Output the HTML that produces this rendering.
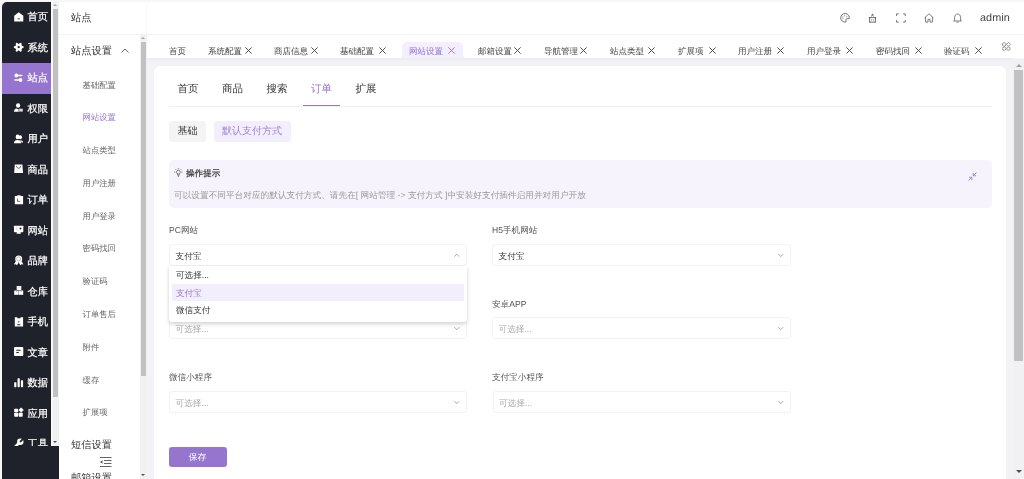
<!DOCTYPE html>
<html><head><meta charset="utf-8">
<style>
*{box-sizing:border-box;margin:0;padding:0}
body{will-change:transform}
html,body{width:1024px;height:479px;overflow:hidden;background:#f6f6f8;font-family:"Liberation Sans",sans-serif;color:#333;text-rendering:geometricPrecision}
.a{position:absolute}
.t{position:absolute;white-space:nowrap;line-height:1}
#side1{left:2px;top:2px;width:56.6px;height:477px;background:#1f222a;border-top-left-radius:5px;overflow:hidden}
#clip1{position:absolute;left:0;top:0;width:49.4px;height:444px;overflow:hidden}
.it{position:absolute;left:0;width:49.5px;height:30.5px}
.it.on{background:#9575cd}
.it span{position:absolute;left:25.5px;top:11.1px;color:#fff;font-size:10.25px;line-height:1;-webkit-text-stroke:0.2px #fff}
.it svg{position:absolute;left:12px;top:9.5px;width:10px;height:10px}
.sbar{position:absolute;background:#f1f1f1}
.thumb{position:absolute;background:#c1c1c1}
.arr{position:absolute;width:0;height:0;border-left:2.5px solid transparent;border-right:2.5px solid transparent}
#side2{left:58.6px;top:2px;width:88.4px;height:477px;background:#fff;border-right:1px solid #f8f8fa}
.s2{position:absolute;font-size:8.3px;color:#666;white-space:nowrap;line-height:1}
#hdr{left:147px;top:2px;width:877px;height:32px;background:#fff}
#hline{left:58.6px;top:33.6px;width:965.4px;height:1px;background:#f3f3f5}
#tabs{left:147px;top:34px;width:877px;height:24px;background:#fff}
.tab{position:absolute;top:46.5px;font-size:8.5px;color:#444;white-space:nowrap;line-height:1}
.x{display:inline-block;width:7px;height:7px;margin-left:3.5px;position:relative;top:0.5px}
#content{left:147px;top:58px;width:866px;height:421px;background:linear-gradient(#ebebf1,#f2f2f7 4px)}
#card{left:154.4px;top:66px;width:851.4px;height:420px;background:#fff;border-radius:6px}
.lbl{position:absolute;font-size:8.6px;color:#555;white-space:nowrap;line-height:1}
.sel{position:absolute;height:21.5px;border:1px solid #f2f2f4;border-radius:3px;background:#fff}
.sel span{position:absolute;left:5.6px;top:6.6px;font-size:8.6px;line-height:1;color:#333}
.sel span.ph{color:#aaa}
.sel svg{position:absolute;right:6px;top:8px;width:6px;height:5px}
</style></head><body>
<div id="side1" class="a"><div id="clip1">
  <div class="it" style="top:0.0px"><svg viewBox="0 0 10 10" style="overflow:visible"><path d="M4.7 0.3L0.2 3.8V9.4H9.3V3.8Z" fill="#fff"/><rect x="3.5" y="6.5" width="2.6" height=".75" rx=".35" fill="#1f222a"/></svg><span>首页</span></div>
  <div class="it" style="top:30.5px"><svg viewBox="0 0 10 10" style="overflow:visible"><circle cx="4.7" cy="5.2" r="3.4" fill="#fff"/><g stroke="#fff" stroke-width="2.3" stroke-linecap="round"><path d="M0.9 5.2H8.5M2.8 1.9L6.6 8.5M6.6 1.9L2.8 8.5"/></g><circle cx="4.7" cy="5.1" r="1.15" fill="#1f222a"/></svg><span>系统</span></div>
  <div class="it on" style="top:61.0px"><svg viewBox="0 0 10 10" style="overflow:visible"><g fill="#fff"><rect x="2.4" y="1.85" width="6" height="1.3" rx=".65"/><rect x="0.2" y="6.35" width="6.3" height="1.3" rx=".65"/><circle cx="2.4" cy="2.5" r="1.9"/><circle cx="6.5" cy="7" r="1.9"/></g></svg><span>站点</span></div>
  <div class="it" style="top:91.5px"><svg viewBox="0 0 10 10" style="overflow:visible"><g fill="#fff"><ellipse cx="4.1" cy="2.5" rx="2.1" ry="2.3"/><path d="M0 8.7C0 6.8 1 5.7 2.6 5.5L4.1 6.2L5.6 5.5C7.5 5.7 8.8 6.8 8.8 8.7Z"/></g><rect x="5" y="5.4" width="4" height="3.4" rx=".4" fill="#fff" stroke="#1f222a" stroke-width=".7"/><rect x="6.3" y="6.6" width="1.4" height=".9" fill="#1f222a" opacity=".5"/></svg><span>权限</span></div>
  <div class="it" style="top:122.0px"><svg viewBox="0 0 10 10" style="overflow:visible"><g fill="#fff"><ellipse cx="6.4" cy="3.3" rx="1.6" ry="2"/><ellipse cx="3.6" cy="2.9" rx="2" ry="2.4"/><path d="M0 9.2C0 7.2 1.3 6 3.6 6C5.9 6 7.2 7.2 7.2 9.2Z"/><path d="M5.6 5.9C7.6 5.9 9.1 7 9.1 8.6H7.6C7.4 7.3 6.8 6.5 5.6 6.2Z"/></g></svg><span>用户</span></div>
  <div class="it" style="top:152.5px"><svg viewBox="0 0 10 10" style="overflow:visible"><path d="M0.8 0.5H8.4L9 9H0.2Z" fill="#fff"/><path d="M2.4 1.8Q2.6 4.3 4.6 4.3Q6.6 4.3 6.8 1.8" stroke="#1f222a" stroke-width=".6" fill="none"/></svg><span>商品</span></div>
  <div class="it" style="top:183.0px"><svg viewBox="0 0 10 10" style="overflow:visible"><rect x="0.8" y="1" width="8.3" height="8.2" rx=".5" fill="#fff"/><path d="M3.3 0.3H6.5V1.6H3.3Z" fill="#fff"/><path d="M3.5 3.5V6.3H6.2" stroke="#1f222a" stroke-width=".8" fill="none" opacity=".8"/></svg><span>订单</span></div>
  <div class="it" style="top:213.5px"><svg viewBox="0 0 10 10" style="overflow:visible"><rect x="0" y="0.8" width="9.3" height="6.4" rx=".4" fill="#fff"/><path d="M2.9 7H6.5L6.9 8.7H2.5Z" fill="#fff"/><circle cx="6.5" cy="3.4" r="1" fill="#1f222a"/><g stroke="#1f222a" stroke-width=".4" opacity=".35"><path d="M1.8 2.3H3.6M1.8 3.7H3.6M1.8 5H5"/></g></svg><span>网站</span></div>
  <div class="it" style="top:244.0px"><svg viewBox="0 0 10 10" style="overflow:visible"><g fill="#fff"><path d="M1.8 5.2L-0.1 8.4L1.9 8.2L2.9 9.3L4.7 6.5Z"/><path d="M7.6 5.2L9.4 8.4L7.4 8.2L6.4 9.3L4.7 6.5Z"/><circle cx="4.7" cy="2.9" r="3.5"/></g><circle cx="4.7" cy="2.9" r="2" fill="none" stroke="#1f222a" stroke-width=".5" opacity=".6"/><circle cx="4.7" cy="2.9" r="1.1" fill="#fff"/></svg><span>品牌</span></div>
  <div class="it" style="top:274.5px"><svg viewBox="0 0 10 10" style="overflow:visible"><g fill="#fff"><rect x="2.7" y="0" width="4.6" height="4"/><rect x="0.2" y="4.5" width="4.4" height="4.3"/><rect x="4.8" y="4.5" width="4.4" height="4.3"/></g><g fill="#1f222a" opacity=".7"><rect x="4.4" y="0.9" width="1.2" height=".4"/><rect x="1.9" y="5.6" width="1.1" height=".4"/><rect x="6.5" y="5.6" width="1.1" height=".4"/></g></svg><span>仓库</span></div>
  <div class="it" style="top:305.0px"><svg viewBox="0 0 10 10" style="overflow:visible"><path d="M0.8 0.3H3.3V1.3H6.5V0.3H9.1V9.5H0.8Z" fill="#fff"/><path d="M3.8 3.5L6.3 4.8L3.8 6.2Z" fill="#1f222a" opacity=".45"/><rect x="3.1" y="7.3" width="3.4" height=".9" rx=".4" fill="#1f222a"/></svg><span>手机</span></div>
  <div class="it" style="top:335.5px"><svg viewBox="0 0 10 10" style="overflow:visible"><rect x="0" y="0" width="9.3" height="9" rx="1.1" fill="#fff"/><rect x="2.1" y="2.85" width="4.7" height=".9" rx=".45" fill="#1f222a"/><rect x="2.1" y="5.05" width="2.9" height=".9" rx=".45" fill="#1f222a"/></svg><span>文章</span></div>
  <div class="it" style="top:366.0px"><svg viewBox="0 0 10 10" style="overflow:visible"><g fill="#fff"><rect x="0.2" y="4.2" width="2.2" height="5" rx=".6"/><rect x="3.55" y="0.3" width="2.2" height="8.9" rx=".6"/><rect x="6.9" y="2.3" width="2.2" height="6.9" rx=".6"/></g></svg><span>数据</span></div>
  <div class="it" style="top:396.5px"><svg viewBox="0 0 10 10" style="overflow:visible"><g fill="#fff"><rect x="0.2" y="0.8" width="4" height="3.4" rx=".7"/><rect x="0.2" y="4.75" width="4" height="3.95" rx=".7"/><rect x="4.7" y="4.75" width="4" height="3.95" rx=".7"/><path d="M7.1 -0.2L9.3 2.05L7.1 4.3L4.9 2.05Z" stroke="#fff" stroke-width=".8" stroke-linejoin="round"/></g></svg><span>应用</span></div>
  <div class="it" style="top:427.0px"><svg viewBox="0 0 10 10" style="overflow:visible"><circle cx="6.3" cy="2.7" r="3.2" fill="#fff"/><path d="M6 3L1.3 7.7" stroke="#fff" stroke-width="2.6" stroke-linecap="round"/><path d="M6.6 2.4L9.8 -0.8" stroke="#1f222a" stroke-width="1.9" stroke-linecap="round"/></svg><span>工具</span></div>
</div></div>
<!-- sidebar1 scrollbar -->
<div class="a" style="left:51.4px;top:2px;width:1.2px;height:444px;background:#f8f8f8"></div>
<div class="sbar" style="left:52.5px;top:2px;width:6.1px;height:444px"></div>
<div class="thumb" style="left:52.9px;top:9px;width:5.2px;height:388.3px"></div>
<div class="arr" style="left:53.2px;top:4.3px;border-bottom:2.5px solid #a3a3a3"></div>
<div class="arr" style="left:53.2px;top:441px;border-top:2.5px solid #505050"></div>
<div id="side2" class="a"></div>
<div class="s2" style="left:71px;top:14.1px;font-size:10.25px;color:#333">站点</div>
<div class="s2" style="left:71px;top:46.8px;font-size:10.25px;color:#333">站点设置</div>
<svg class="a" style="left:120.5px;top:47.9px" width="8" height="5" viewBox="0 0 8 5"><path d="M0.5 4.5L4 1L7.5 4.5" stroke="#555" stroke-width=".9" fill="none"/></svg>
<div class="s2" style="left:82.6px;top:80.5px">基础配置</div>
<div class="s2" style="left:82.6px;top:113px;color:#9575cd">网站设置</div>
<div class="s2" style="left:82.6px;top:146px">站点类型</div>
<div class="s2" style="left:82.6px;top:178.5px">用户注册</div>
<div class="s2" style="left:82.6px;top:211.5px">用户登录</div>
<div class="s2" style="left:82.6px;top:244px">密码找回</div>
<div class="s2" style="left:82.6px;top:277px">验证码</div>
<div class="s2" style="left:82.6px;top:309.5px">订单售后</div>
<div class="s2" style="left:82.6px;top:342.5px">附件</div>
<div class="s2" style="left:82.6px;top:375.5px">缓存</div>
<div class="s2" style="left:82.6px;top:408px">扩展项</div>
<div class="s2" style="left:71px;top:440.6px;font-size:10.25px;color:#333">短信设置</div>
<svg class="a" style="left:99.5px;top:457px" width="12" height="10" viewBox="0 0 12 10"><g stroke="#555" stroke-width=".9"><path d="M0 0.5H11.5M4 3.5H11.5M4 6.5H11.5M0 9.5H11.5"/></g><path d="M0 5L2.5 3.3V6.7Z" fill="#555"/></svg>
<div class="s2" style="left:71px;top:474.2px;font-size:10.25px;color:#333">邮箱设置</div>
<!-- sidebar2 scrollbar -->
<div class="sbar" style="left:140px;top:34.6px;width:7px;height:444.4px"></div>
<div class="thumb" style="left:141px;top:42.2px;width:5.2px;height:334.3px"></div>
<div class="arr" style="left:141px;top:37.3px;border-bottom:2.5px solid #a3a3a3"></div>
<div class="arr" style="left:141px;top:473.5px;border-top:2.5px solid #505050"></div>

<div id="hdr" class="a"></div>
<!-- header icons -->
<svg class="a" style="left:839.5px;top:12.5px" width="10" height="10" viewBox="0 0 10 10" fill="none" stroke="#666" stroke-width=".9"><path d="M9.2 5.7A4.3 4.3 0 1 0 5.9 9L6 6.5Q6.1 5.8 6.8 5.7Z" stroke-linejoin="round"/><g fill="#888" stroke="none"><circle cx="2.9" cy="3.9" r=".6"/><circle cx="4.8" cy="2.7" r=".6"/><circle cx="6.8" cy="3.8" r=".6"/><circle cx="2.9" cy="5.8" r=".6"/></g></svg>
<svg class="a" style="left:868px;top:12.5px" width="10" height="10" viewBox="0 0 10 10" fill="none" stroke="#555" stroke-width=".85"><path d="M3.6 3.4L4.5 0.9L5.4 3.4M1.6 4.6H7.4M1.6 4.6V9.2M7.4 4.6V9.2M1 9.2H8M3.6 6.6V7.6M5.4 6.6V7.6"/><circle cx="1.4" cy="4.6" r=".7" fill="#555" stroke="none"/><circle cx="7.6" cy="4.6" r=".7" fill="#555" stroke="none"/></svg>
<svg class="a" style="left:896px;top:12.5px" width="10" height="10" viewBox="0 0 10 10" fill="none" stroke="#555" stroke-width=".8"><path d="M0.4 3V0.9H2.8M7.2 0.9H9.3V3M9.3 7V9.1H7.2M2.8 9.1H0.4V7"/></svg>
<svg class="a" style="left:923.5px;top:12.5px" width="10" height="10" viewBox="0 0 10 10" fill="none" stroke="#555" stroke-width=".75" stroke-linejoin="round"><path d="M0.5 4.9L5 0.8L9.5 4.9M1.6 4V9.1H4V6.3H6V9.1H8.4V4"/></svg>
<svg class="a" style="left:952.5px;top:12.5px" width="10" height="10" viewBox="0 0 10 10" fill="none" stroke="#555" stroke-width=".75"><path d="M1.6 7.8V4.6C1.6 2.3 3 0.9 4.6 0.9S7.6 2.3 7.6 4.6V7.8M0.4 8H8.8M3.6 9.1H5.6"/></svg>
<div class="t" style="left:980px;top:13.3px;font-size:10.8px;letter-spacing:0.1px;color:#444">admin</div>
<div id="tabs" class="a"></div>
<div id="hline" class="a"></div>
<div class="tab" style="left:169px">首页</div>
<div class="tab" style="left:208px">系统配置</div><svg class="a" style="left:245px;top:47.3px" width="7" height="7" viewBox="0 0 7 7"><path d="M0.4 0.4L6.6 6.6M6.6 0.4L0.4 6.6" stroke="#444" stroke-width=".95"/></svg>
<div class="tab" style="left:274px">商店信息</div><svg class="a" style="left:310.9px;top:47.3px" width="7" height="7" viewBox="0 0 7 7"><path d="M0.4 0.4L6.6 6.6M6.6 0.4L0.4 6.6" stroke="#444" stroke-width=".95"/></svg>
<div class="a" style="left:402px;top:41.5px;width:61.2px;height:16.5px;background:#f3effc;border-radius:5px 5px 0 0"></div><div class="a" style="left:398.5px;top:54.5px;width:3.5px;height:3.5px;background:radial-gradient(circle at 0 0,transparent 3.5px,#f3effc 3.6px)"></div><div class="a" style="left:463.2px;top:54.5px;width:3.5px;height:3.5px;background:radial-gradient(circle at 100% 0,transparent 3.5px,#f3effc 3.6px)"></div>
<div class="tab" style="left:340px">基础配置</div><svg class="a" style="left:379.3px;top:47.3px" width="7" height="7" viewBox="0 0 7 7"><path d="M0.4 0.4L6.6 6.6M6.6 0.4L0.4 6.6" stroke="#444" stroke-width=".95"/></svg>
<div class="tab" style="left:409px;color:#9575cd">网站设置</div><svg class="a" style="left:448.1px;top:47.3px" width="7" height="7" viewBox="0 0 7 7"><path d="M0.4 0.4L6.6 6.6M6.6 0.4L0.4 6.6" stroke="#9575cd" stroke-width=".95"/></svg>
<div class="tab" style="left:478px">邮箱设置</div><svg class="a" style="left:514.1px;top:47.3px" width="7" height="7" viewBox="0 0 7 7"><path d="M0.4 0.4L6.6 6.6M6.6 0.4L0.4 6.6" stroke="#444" stroke-width=".95"/></svg>
<div class="tab" style="left:544px">导航管理</div><svg class="a" style="left:580.4px;top:47.3px" width="7" height="7" viewBox="0 0 7 7"><path d="M0.4 0.4L6.6 6.6M6.6 0.4L0.4 6.6" stroke="#444" stroke-width=".95"/></svg>
<div class="tab" style="left:610px">站点类型</div><svg class="a" style="left:647.6px;top:47.3px" width="7" height="7" viewBox="0 0 7 7"><path d="M0.4 0.4L6.6 6.6M6.6 0.4L0.4 6.6" stroke="#444" stroke-width=".95"/></svg>
<div class="tab" style="left:678px">扩展项</div><svg class="a" style="left:708.5px;top:47.3px" width="7" height="7" viewBox="0 0 7 7"><path d="M0.4 0.4L6.6 6.6M6.6 0.4L0.4 6.6" stroke="#444" stroke-width=".95"/></svg>
<div class="tab" style="left:738px">用户注册</div><svg class="a" style="left:777.2px;top:47.3px" width="7" height="7" viewBox="0 0 7 7"><path d="M0.4 0.4L6.6 6.6M6.6 0.4L0.4 6.6" stroke="#444" stroke-width=".95"/></svg>
<div class="tab" style="left:807px">用户登录</div><svg class="a" style="left:846.4px;top:47.3px" width="7" height="7" viewBox="0 0 7 7"><path d="M0.4 0.4L6.6 6.6M6.6 0.4L0.4 6.6" stroke="#444" stroke-width=".95"/></svg>
<div class="tab" style="left:876px">密码找回</div><svg class="a" style="left:914.7px;top:47.3px" width="7" height="7" viewBox="0 0 7 7"><path d="M0.4 0.4L6.6 6.6M6.6 0.4L0.4 6.6" stroke="#444" stroke-width=".95"/></svg>
<div class="tab" style="left:944px">验证码</div><svg class="a" style="left:974.7px;top:47.3px" width="7" height="7" viewBox="0 0 7 7"><path d="M0.4 0.4L6.6 6.6M6.6 0.4L0.4 6.6" stroke="#444" stroke-width=".95"/></svg>
<svg class="a" style="left:1001.6px;top:42.2px" width="9" height="9" viewBox="0 0 9 9" fill="none" stroke="#777" stroke-width=".75"><rect x="0.5" y="0.8" width="3.2" height="3.2" rx="1"/><path d="M6.5 0.3L8.4 2.3L6.5 4.3L4.6 2.3Z" stroke-linejoin="round"/><circle cx="2.1" cy="6.6" r="1.7"/><circle cx="6.5" cy="6.6" r="1.7"/></svg>
<div id="content" class="a"></div>
<!-- content scrollbar -->
<div class="sbar" style="left:1013px;top:58.5px;width:11px;height:420.5px"></div>
<div class="thumb" style="left:1014px;top:70px;width:9.2px;height:290.7px"></div>
<div class="arr" style="left:1016px;top:63.5px;border-left-width:3px;border-right-width:3px;border-bottom:3px solid #a3a3a3"></div>
<div class="arr" style="left:1016px;top:470px;border-left-width:3px;border-right-width:3px;border-top:3px solid #505050"></div>
<div id="card" class="a"></div>
<!-- card tabs -->
<div class="t" style="left:177.5px;top:83.5px;font-size:10.5px;color:#333">首页</div>
<div class="t" style="left:222px;top:83.5px;font-size:10.5px;color:#333">商品</div>
<div class="t" style="left:266.5px;top:83.5px;font-size:10.5px;color:#333">搜索</div>
<div class="t" style="left:311px;top:83.5px;font-size:10.5px;color:#9575cd">订单</div>
<div class="t" style="left:355.5px;top:83.5px;font-size:10.5px;color:#333">扩展</div>
<div class="a" style="left:169px;top:105.8px;width:823px;height:1px;background:#f1f1f3"></div>
<div class="a" style="left:302.7px;top:104.7px;width:37.3px;height:1.5px;background:#9575cd"></div>
<div class="a" style="left:169px;top:121px;width:37px;height:21px;background:#f4f4f5;border-radius:3px"></div>
<div class="t" style="left:177.5px;top:127.3px;font-size:10px;color:#333">基础</div>
<div class="a" style="left:214px;top:121px;width:77px;height:21px;background:#f3eefc;border-radius:3px"></div>
<div class="t" style="left:222px;top:127.3px;font-size:10px;color:#a080d6">默认支付方式</div>
<!-- tip -->
<div class="a" style="left:168.5px;top:160px;width:823.5px;height:48px;background:#f7f3fd;border-radius:5px"></div>
<svg class="a" style="left:174px;top:168px" width="9" height="9" viewBox="0 0 9 9" fill="none" stroke="#555" stroke-width=".7"><circle cx="4.4" cy="4.1" r="1.9"/><path d="M4.4 0V1.2M0.2 4.1H1.4M7.4 4.1H8.6M1.4 1.1L2.2 1.9M7.4 1.1L6.6 1.9M3.3 5.8L4.4 8.6L5.5 5.8"/></svg>
<div class="t" style="left:186px;top:168.8px;font-size:8.6px;color:#333;-webkit-text-stroke:0.2px #333">操作提示</div>
<div class="t" style="left:174px;top:190.5px;font-size:8.66px;color:#999">可以设置不同平台对应的默认支付方式、请先在[ 网站管理 -&gt; 支付方式 ]中安装好支付插件启用并对用户开放</div>
<svg class="a" style="left:968px;top:172px" width="9" height="9" viewBox="0 0 9 9" fill="none" stroke="#9575cd" stroke-width=".8"><path d="M0.5 8.5L3.8 5.2M1 5.2H3.8V8M8.5 0.5L5.2 3.8M5.2 1V3.8H8"/></svg>
<!-- form -->
<div class="lbl" style="left:169px;top:226px">PC网站</div>
<div class="lbl" style="left:492px;top:226px">H5手机网站</div>
<div class="sel" style="left:169px;top:317px;width:297.5px"><span class="ph">可选择...</span><svg viewBox="0 0 6 5"><path d="M0.4 1.2L2.8 3.6L5.2 1.2" stroke="#888" stroke-width=".75" fill="none"/></svg></div>
<div class="sel" style="left:169px;top:244px;width:297.5px"><span>支付宝</span><svg viewBox="0 0 6 5"><path d="M0.4 3.6L2.8 1.2L5.2 3.6" stroke="#888" stroke-width=".75" fill="none"/></svg></div>
<div class="sel" style="left:492px;top:244px;width:298.5px"><span>支付宝</span><svg viewBox="0 0 6 5"><path d="M0.4 1.2L2.8 3.6L5.2 1.2" stroke="#888" stroke-width=".75" fill="none"/></svg></div>
<div class="lbl" style="left:492px;top:299.8px">安卓APP</div>
<div class="sel" style="left:492px;top:317px;width:298.5px"><span class="ph">可选择...</span><svg viewBox="0 0 6 5"><path d="M0.4 1.2L2.8 3.6L5.2 1.2" stroke="#888" stroke-width=".75" fill="none"/></svg></div>
<div class="a" style="left:169px;top:266px;width:297.5px;height:56px;background:#fff;border-radius:0 0 3px 3px;box-shadow:0 2px 4px rgba(0,0,0,.18)"></div>
<div class="a" style="left:172px;top:284px;width:291.5px;height:16.5px;background:#f3eefc"></div>
<div class="t" style="left:176px;top:270.6px;font-size:8.6px;color:#333">可选择...</div>
<div class="t" style="left:176px;top:288.6px;font-size:8.6px;color:#9575cd">支付宝</div>
<div class="t" style="left:176px;top:306px;font-size:8.6px;color:#333">微信支付</div>
<div class="lbl" style="left:169px;top:372.8px">微信小程序</div>
<div class="sel" style="left:169px;top:391px;width:297.5px"><span class="ph">可选择...</span><svg viewBox="0 0 6 5"><path d="M0.4 1.2L2.8 3.6L5.2 1.2" stroke="#888" stroke-width=".75" fill="none"/></svg></div>
<div class="lbl" style="left:492px;top:372.8px">支付宝小程序</div>
<div class="sel" style="left:492.5px;top:391px;width:298.5px"><span class="ph">可选择...</span><svg viewBox="0 0 6 5"><path d="M0.4 1.2L2.8 3.6L5.2 1.2" stroke="#888" stroke-width=".75" fill="none"/></svg></div>
<div class="a" style="left:169px;top:447px;width:57.5px;height:20px;background:#9575cd;border-radius:3px"></div>
<div class="t" style="left:188.5px;top:453px;font-size:9px;color:#fff">保存</div>
</body></html>
